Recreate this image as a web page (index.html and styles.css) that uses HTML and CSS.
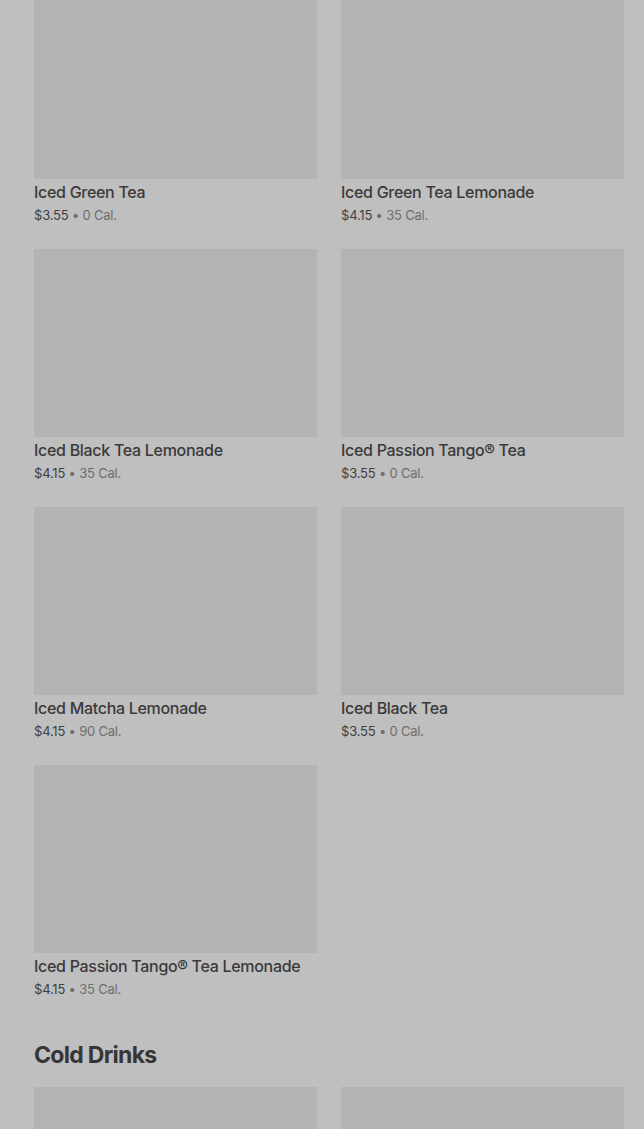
FILE: index.html
```html
<!DOCTYPE html>
<html lang="en">

<head>
  <meta charset="UTF-8">
  <title>Menu</title>
  <link rel="stylesheet" href="styles.css">
</head>

<body>
  <div class="menu">
    <section class="section first">
      <div class="grid">
        <div class="item">
          <div class="thumb"></div>
          <div class="name">Iced Green Tea</div>
          <div class="meta"><span class="price">$3.55</span> • 0 Cal.</div>
        </div>
        <div class="item">
          <div class="thumb"></div>
          <div class="name">Iced Green Tea Lemonade</div>
          <div class="meta"><span class="price">$4.15</span> • 35 Cal.</div>
        </div>
        <div class="item">
          <div class="thumb"></div>
          <div class="name">Iced Black Tea Lemonade</div>
          <div class="meta"><span class="price">$4.15</span> • 35 Cal.</div>
        </div>
        <div class="item">
          <div class="thumb"></div>
          <div class="name">Iced Passion Tango® Tea</div>
          <div class="meta"><span class="price">$3.55</span> • 0 Cal.</div>
        </div>
        <div class="item">
          <div class="thumb"></div>
          <div class="name">Iced Matcha Lemonade</div>
          <div class="meta"><span class="price">$4.15</span> • 90 Cal.</div>
        </div>
        <div class="item">
          <div class="thumb"></div>
          <div class="name">Iced Black Tea</div>
          <div class="meta"><span class="price">$3.55</span> • 0 Cal.</div>
        </div>
        <div class="item">
          <div class="thumb"></div>
          <div class="name">Iced Passion Tango® Tea Lemonade</div>
          <div class="meta"><span class="price">$4.15</span> • 35 Cal.</div>
        </div>
      </div>
    </section>

    <section class="section">
      <h2>Cold Drinks</h2>
      <div class="grid">
        <div class="item">
          <div class="thumb"></div>
        </div>
        <div class="item">
          <div class="thumb"></div>
        </div>
      </div>
    </section>
  </div>
</body>

</html>
```

FILE: styles.css
```css
html,
body {
  margin: 0;
  height: 100%;
  overflow: hidden;
}

body {
  font-family: Inter, "Noto Sans", sans-serif;
  background: #bfbfbf;
  color: #3a3a3a;
}

.menu {
  padding: 0 20px 0 34px;
}

.section.first {
  margin-top: -9px;
}

.grid {
  display: grid;
  grid-template-columns: 1fr 1fr;
  column-gap: 24px;
  row-gap: 25px;
}

.thumb {
  height: 188px;
  background: #b3b3b3;
}

.name {
  margin-top: 3px;
  font-size: 16px;
  line-height: 20px;
  font-weight: 500;
  letter-spacing: -0.3px;
  color: #3a3a3a;
}

.meta {
  margin-top: 4px;
  font-size: 13px;
  line-height: 18px;
  letter-spacing: -0.2px;
  color: #6e6e6e;
}

.price {
  color: #3f3f3f;
}

h2 {
  margin: 42px 0 0;
  height: 47px;
  font-size: 23px;
  line-height: 30px;
  font-weight: 700;
  letter-spacing: -0.7px;
  color: #363636;
}
```
